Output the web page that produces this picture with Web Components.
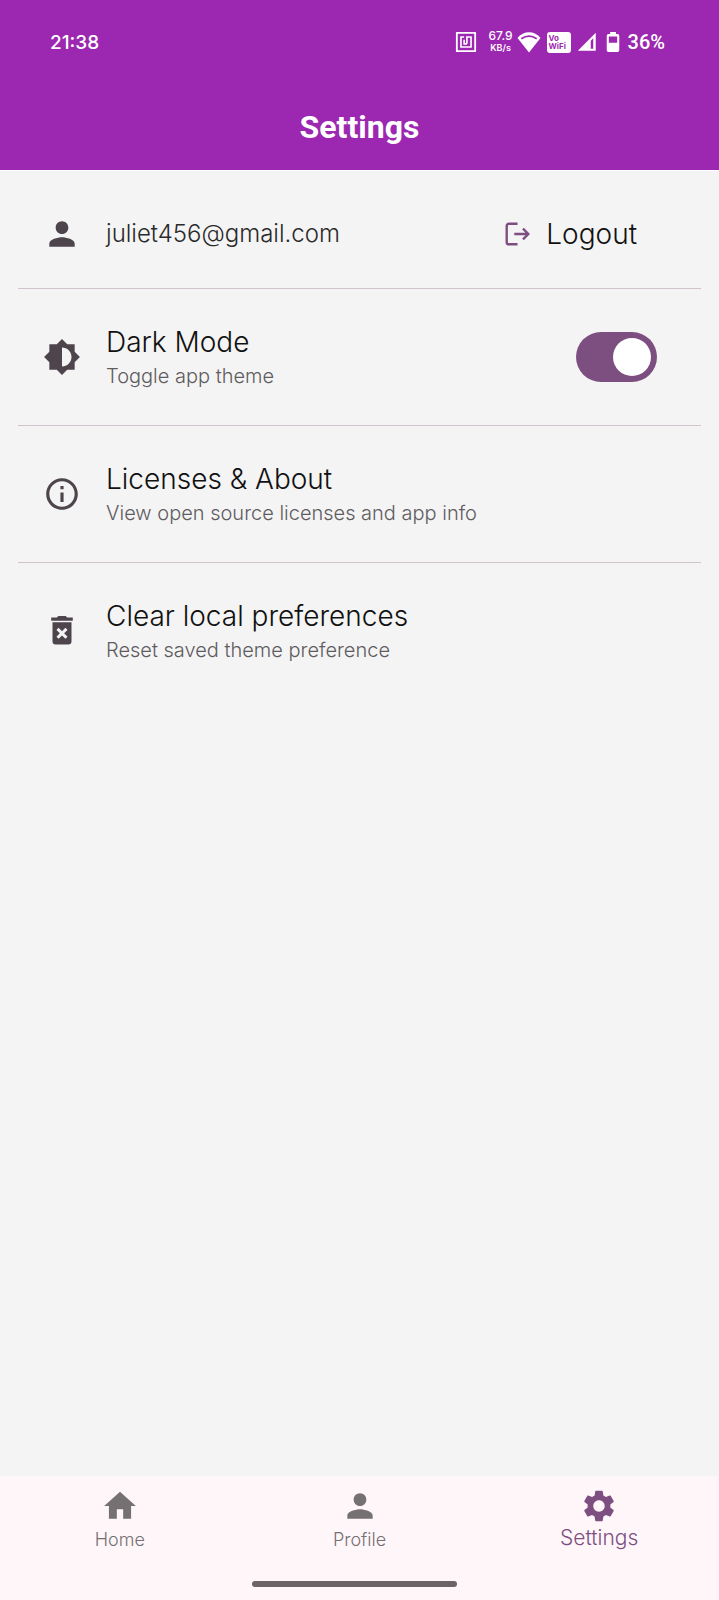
<!DOCTYPE html>
<html lang="en">
<head>
<meta charset="utf-8">
<meta name="viewport" content="width=device-width, initial-scale=1">
<title>Settings</title>
<style>
  :root { --primary: #9c27b0; --accent: #7d4e80; --ink: #111; --icon: #4d444c; --muted: #5f5c5f; --line: #cfc3cd; }
  body { margin: 0; background: #f4f4f4; color: var(--ink); font-family: Inter, "Noto Sans", sans-serif; font-weight: 300; }
</style>
</head>
<body>
<settings-app></settings-app>
<script>
const ICONS = {
  person: '<path d="M12 12c2.21 0 4-1.79 4-4s-1.79-4-4-4-4 1.790-4 4 1.790 4 4 4zm0 2c-2.670 0-8 1.340-8 4v2h16v-2c0-2.660-5.330-4-8-4z"/>',
  theme: '<path d="M20 15.310 23.310 12 20 8.690V4h-4.690L12 .69 8.690 4H4v4.690L.69 12 4 15.310V20h4.690L12 23.310 15.310 20H20v-4.690zM12 18V6c3.310 0 6 2.690 6 6s-2.690 6-6 6z"/>',
  info: '<path d="M11 7h2v2h-2zm0 4h2v6h-2zm1-9C6.480 2 2 6.480 2 12s4.480 10 10 10 10-4.480 10-10S17.520 2 12 2zm0 18c-4.410 0-8-3.590-8-8s3.590-8 8-8 8 3.590 8 8-3.590 8-8 8z"/>',
  trash: '<path fill-rule="evenodd" d="M5.200 5.500V3.500h3.500l1-1h4.600l1 1h3.500v2zM6 6.500h12V18.500a2 2 0 0 1-2 2H8a2 2 0 0 1-2-2zM8.500 11.300l2.150 2.150L8.500 15.600l1.350 1.350L12 14.800l2.150 2.150 1.350-1.350-2.150-2.150 2.150-2.150-1.350-1.350L12 12.100 9.850 9.950z"/>',
  home: '<path d="M10 20v-6h4v6h5v-8h3L12 3 2 12h3v8z"/>',
  gear: '<path d="M19.140 12.940c.04-.3.06-.61.06-.94 0-.32-.02-.64-.07-.94l2.030-1.580c.18-.14.23-.41.12-.61l-1.920-3.320c-.12-.22-.37-.29-.59-.22l-2.390.96c-.5-.38-1.030-.7-1.620-.94L14.400 2.810c-.04-.24-.24-.41-.48-.41h-3.840c-.24 0-.43.17-.47.41L9.250 5.350c-.59.24-1.130.57-1.620.94L5.240 5.330c-.22-.08-.47 0-.59.22L2.740 8.870c-.12.21-.08.47.12.61l2.030 1.580c-.05.3-.09.63-.09.94s.02.64.07.94l-2.030 1.580c-.18.14-.23.41-.12.61l1.920 3.320c.12.22.37.29.59.22l2.390-.96c.5.38 1.030.7 1.620.94l.36 2.540c.05.24.24.41.48.41h3.840c.24 0 .44-.17.47-.41l.36-2.540c.59-.24 1.130-.56 1.620-.94l2.390.96c.22.08.47 0 .59-.22l1.920-3.320c.12-.22.07-.47-.12-.61l-2.010-1.580zM12 15.600c-1.980 0-3.600-1.620-3.600-3.600s1.620-3.600 3.600-3.600 3.600 1.620 3.600 3.600-1.620 3.600-3.600 3.600z"/>',
  logout: '<path d="M12.500 2.500H4.500A2 2 0 0 0 2.500 4.500v15a2 2 0 0 0 2 2h8M9.500 12H22.500M17.500 7l5 5-5 5" fill="none" stroke="currentColor" stroke-width="2.200"/>',
  nfc: '<path d="M2 2h20v20H2z" fill="none" stroke="currentColor" stroke-width="2" stroke-linejoin="round"/><path d="M10 6.500H6.500v11h11v-11H13v7.500M10 9.500v4.500h3" fill="none" stroke="currentColor" stroke-width="1.800"/>',
  wifi: '<path d="M12 22.500.5 8C3.500 4.200 7.500 2.300 12 2.300S20.500 4.200 23.500 8z"/><path d="M4.300 8.700q7.700-5 15.400 0" fill="none" stroke="#9c27b0" stroke-width="1.700"/>',
  signal: '<path fill-rule="evenodd" d="M1 22.500 22.500 1v21.500zM16.500 10.500v9.700h3V7.500z"/>',
  battery: '<path fill-rule="evenodd" d="M8.500 0h7v2.500h2a2 2 0 0 1 2 2V22a2 2 0 0 1-2 2h-11a2 2 0 0 1-2-2V4.500a2 2 0 0 1 2-2h2zM7 5.500v7.500h10v-7.500z"/>'
};

function define(name, html, setup) {
  const template = document.createElement('template');
  template.innerHTML = html;
  customElements.define(name, class extends HTMLElement {
    constructor() {
      super();
      this.attachShadow({ mode: 'open' }).append(template.content.cloneNode(true));
    }
    connectedCallback() { if (setup) setup(this, this.shadowRoot); }
  });
}

customElements.define('ui-icon', class extends HTMLElement {
  static observedAttributes = ['name'];
  constructor() {
    super();
    this.attachShadow({ mode: 'open' }).innerHTML = `
      <style>
        :host { display: block; flex: none; width: var(--size, 38px); height: var(--size, 38px); }
        svg { display: block; width: 100%; height: 100%; fill: currentColor; }
      </style>
      <svg viewBox="0 0 24 24" aria-hidden="true"></svg>`;
  }
  attributeChangedCallback(attr, old, value) {
    this.shadowRoot.querySelector('svg').innerHTML = ICONS[value] || '';
  }
});

define('status-bar', `
  <style>
    :host { display: flex; align-items: center; justify-content: space-between; height: 84px; padding: 0 54px 0 50px;
            color: #fff; font-family: Inter, sans-serif; font-size: 19px; font-weight: 500; }
    .right { display: flex; align-items: center; gap: 6px; }
    .speed { display: grid; justify-items: center; width: 22px; margin-left: 6px; font-size: 12px; line-height: 12px; }
    .speed small { font-size: 9px; font-weight: 600; }
    .vo { box-sizing: border-box; width: 24px; height: 21px; padding: 2px; border-radius: 3px; background: #fff;
          color: var(--primary); font-size: 8px; line-height: 8px; font-weight: 700; }
    .level { margin-left: -1px; font: 500 20px/24px Roboto, sans-serif; }
  </style>
  <time>21:38</time>
  <div class="right">
    <ui-icon name="nfc" style="--size:22px"></ui-icon>
    <div class="speed"><span>67.9</span><small>KB/s</small></div>
    <ui-icon name="wifi" style="--size:24px"></ui-icon>
    <div class="vo">Vo<br>WiFi</div>
    <ui-icon name="signal" style="--size:20px"></ui-icon>
    <ui-icon name="battery" style="--size:20px"></ui-icon>
    <span class="level">36%</span>
  </div>`);

define('app-header', `
  <style>
    :host { display: block; background: var(--primary); border-bottom: 1px solid #fff; }
    h1 { margin: 0; padding: 24px 0; text-align: center; color: #fff; font: 700 32px/38px Roboto, sans-serif; }
  </style>
  <status-bar></status-bar>
  <h1><slot></slot></h1>`);

define('setting-row', `
  <style>
    :host { display: flex; align-items: center; gap: 25px; box-sizing: border-box; min-height: 137px;
            margin: 0 18px; padding: 0 44px 0 25px; border-bottom: 1px solid var(--line); }
    :host([compact]) { min-height: 110px; }
    :host(:last-of-type) { border-color: transparent; }
    ui-icon { color: var(--icon); }
    .text { flex: 1; min-width: 0; }
  </style>
  <ui-icon></ui-icon>
  <div class="text"><slot></slot></div>
  <slot name="action"></slot>`,
  (el, root) => root.querySelector('ui-icon').setAttribute('name', el.getAttribute('icon')));

define('row-text', `
  <style>
    :host { display: block; padding-top: 2px; }
    .title { display: block; font-size: 28px; line-height: 36px; }
    .sub { display: block; color: var(--muted); font-size: 20px; line-height: 32px; }
  </style>
  <span class="title"><slot></slot></span>
  <span class="sub"><slot name="sub"></slot></span>`);

define('toggle-switch', `
  <style>
    :host { display: block; flex: none; }
    input { appearance: none; display: flex; align-items: center; box-sizing: border-box; width: 81px; height: 50px; margin: 0;
            padding: 6px; border-radius: 25px; background: #bbb; cursor: pointer; }
    input::before { content: ""; width: 38px; height: 38px; border-radius: 50%; background: #fff; }
    input:checked { justify-content: flex-end; background: var(--accent); }
  </style>
  <input type="checkbox" role="switch" aria-label="Dark Mode" checked>`);

define('logout-button', `
  <style>
    :host { display: block; flex: none; padding-right: 20px; }
    button { display: flex; align-items: center; gap: 16px; padding: 0; border: 0; background: none; color: inherit;
             font: inherit; font-size: 28px; line-height: 36px; cursor: pointer; }
    ui-icon { --size: 26px; color: var(--accent); }
  </style>
  <button type="button"><ui-icon name="logout"></ui-icon><slot></slot></button>`);

define('nav-item', `
  <style>
    :host { display: block; flex: 1; color: #757072; }
    a { display: flex; flex-direction: column; align-items: center; padding-top: 11px; color: inherit; text-decoration: none;
        font-size: 18px; line-height: 30px; }
    :host([active]) { color: var(--accent); }
    :host([active]) a { font-size: 21px; line-height: 26px; }
  </style>
  <a href="#"><ui-icon></ui-icon><slot></slot></a>`,
  (el, root) => {
    root.querySelector('ui-icon').setAttribute('name', el.getAttribute('icon'));
    if (el.hasAttribute('active')) root.querySelector('a').setAttribute('aria-current', 'page');
  });

define('bottom-nav', `
  <style>
    :host { display: block; background: #fff6fa; padding-bottom: 13px; }
    nav { display: flex; height: 105px; }
    .handle { width: 28.5%; height: 6px; margin-left: 35%; border-radius: 3px; background: #6b6365; }
  </style>
  <nav aria-label="Main"><slot></slot></nav>
  <div class="handle"></div>`);

define('settings-app', `
  <style>
    :host { display: flex; flex-direction: column; min-height: 100vh; }
    main { flex: 1; padding-top: 8px; }
    .mail { font-size: 24px; line-height: 28px; color: #2b2a2b; }
    .plain { display: block; width: 100%; padding: 0; border: 0; background: none; color: inherit; font: inherit; text-align: left; cursor: pointer; }
  </style>
  <app-header>Settings</app-header>
  <main>
    <setting-row icon="person" compact>
      <span class="mail">juliet456@gmail.com</span>
      <logout-button slot="action">Logout</logout-button>
    </setting-row>
    <setting-row icon="theme">
      <row-text>Dark Mode<span slot="sub">Toggle app theme</span></row-text>
      <toggle-switch slot="action"></toggle-switch>
    </setting-row>
    <setting-row icon="info">
      <button class="plain" type="button"><row-text>Licenses &amp; About<span slot="sub">View open source licenses and app info</span></row-text></button>
    </setting-row>
    <setting-row icon="trash">
      <button class="plain" type="button"><row-text>Clear local preferences<span slot="sub">Reset saved theme preference</span></row-text></button>
    </setting-row>
  </main>
  <bottom-nav>
    <nav-item icon="home">Home</nav-item>
    <nav-item icon="person">Profile</nav-item>
    <nav-item icon="gear" active>Settings</nav-item>
  </bottom-nav>`);
</script>
</body>
</html>
